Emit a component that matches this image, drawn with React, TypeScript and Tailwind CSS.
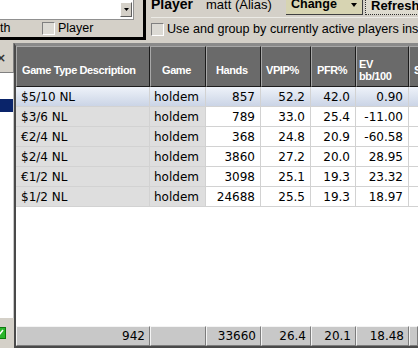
const widths = ["w-[134px]", "w-[56px]", "w-[55px]", "w-[50px]", "w-[45px]", "w-[53px]"];

const headers = [
  { label: ["Game Type Description"], pad: "pl-[5px]" },
  { label: ["Game"], pad: "pl-[11px]" },
  { label: ["Hands"], pad: "pl-[9px]" },
  { label: ["VPIP%"], pad: "pl-[4px]" },
  { label: ["PFR%"], pad: "pl-[5px]" },
  { label: ["EV", "bb/100"], pad: "pl-[2px]" },
];

const rows = [
  ["$5/10 NL", "holdem", "857", "52.2", "42.0", "0.90"],
  ["$3/6 NL", "holdem", "789", "33.0", "25.4", "-11.00"],
  ["€2/4 NL", "holdem", "368", "24.8", "20.9", "-60.58"],
  ["$2/4 NL", "holdem", "3860", "27.2", "20.0", "28.95"],
  ["€1/2 NL", "holdem", "3098", "25.1", "19.3", "23.32"],
  ["$1/2 NL", "holdem", "24688", "25.5", "19.3", "18.97"],
];

const totals = ["942", "", "33660", "26.4", "20.1", "18.48"];

function Checkbox() {
  return (
    <div className="w-[13px] h-[13px] shrink-0 border border-t-[#808080] border-l-[#808080] border-r-white border-b-white bg-[#dcdad4]" />
  );
}

function TopBar() {
  return (
    <div className="h-[43px] flex shrink-0 font-['Liberation_Sans',sans-serif] text-black">
      <div className="w-[146px] h-[40px] shrink-0 border-r-[3px] border-b-[3px] border-black flex flex-col">
        <div className="h-[20px] w-[134px] bg-white border-r border-b border-r-[#909090] border-b-[#909090] flex justify-end items-start pt-[2px] pr-[1px]">
          <div className="w-[12px] h-[15px] bg-[#d4d0c8] border border-t-white border-l-white border-r-[#606060] border-b-[#606060] flex items-center justify-center">
            <svg width="5" height="3" viewBox="0 0 5 3">
              <path d="M0 0h5L2.5 3z" fill="#000" />
            </svg>
          </div>
        </div>
        <div className="flex items-center h-[17px] text-[12.5px] leading-none">
          <span className="w-[42px]">th</span>
          <Checkbox />
          <span className="ml-[3px]">Player</span>
        </div>
      </div>
      <div className="flex-1 flex flex-col pl-[5px]">
        <div className="h-[17px] flex items-start overflow-hidden">
          <div className="flex items-center h-[22px] -mt-[7px]">
            <span className="text-[14px] font-bold leading-none w-[55px]">Player</span>
            <span className="text-[13px] leading-none w-[80px]">matt (Alias)</span>
            <div className="w-[77px] h-[22px] bg-[#d7d4b2] border-r border-b border-r-[#404040] border-b-[#404040] flex items-center pl-[5px] pt-[2px]">
              <span className="text-[12.5px] font-bold leading-none w-[60px]">Change</span>
              <svg width="6" height="4" viewBox="0 0 6 4">
                <path d="M0 0h6L3 4z" fill="#000" />
              </svg>
            </div>
            <div className="ml-[2px] w-[60px] h-[22px] bg-[#dedbcf] border border-dotted border-[#303030] flex items-center pl-[5px] pt-[2px]">
              <span className="text-[13px] font-bold leading-none whitespace-nowrap">Refresh</span>
            </div>
          </div>
        </div>
        <div className="h-[20px] flex items-center border-t border-[#ecebe6] text-[12.6px] leading-none pt-[3px]">
          <Checkbox />
          <span className="ml-[3px] whitespace-nowrap">Use and group by currently active players ins</span>
        </div>
      </div>
    </div>
  );
}

function LeftStrip() {
  return (
    <div className="w-[14px] shrink-0 flex flex-col">
      <div className="h-[30px] border-r border-b border-[#808080] flex items-center overflow-hidden">
        <span className="-ml-[4px] text-[12px] font-bold text-[#333] leading-none font-['DejaVu_Sans',sans-serif]">×</span>
      </div>
      <div className="flex-1 bg-white border-r border-[#c8c8c8] flex flex-col">
        <div className="h-[26px]" />
        <div className="h-[13px] bg-[#0a246a]" />
      </div>
      <div className="h-[30px] flex items-center">
        <div className="-ml-[6px] w-[12px] h-[12px] bg-[#2bb52b] border border-[#0c7a0c] flex items-center justify-center">
          <svg width="8" height="8" viewBox="0 0 8 8">
            <path d="M1 4l2 2 4-5" stroke="#fff" strokeWidth="1.5" fill="none" />
          </svg>
        </div>
      </div>
    </div>
  );
}

function Grid() {
  return (
    <div className="flex-1 flex flex-col border-l-2 border-t-[3px] border-b-2 border-l-[#4a4a4a] border-t-[#8a8a8a] border-b-[#4a4a4a] bg-white overflow-hidden font-['DejaVu_Sans',sans-serif]">
      <div className="h-[41px] flex shrink-0 bg-[#6a6a6a] font-['Liberation_Sans',sans-serif] text-white font-bold text-[11px] tracking-[-0.4px] leading-[12px]">
        {headers.map((h, i) => (
          <div
            key={i}
            className={`${widths[i]} shrink-0 border border-t-[#a8a8a8] border-l-[#a8a8a8] border-r-[#1c1c1c] border-b-[#1c1c1c] flex flex-col justify-center pt-[6px] ${h.pad}`}
          >
            {h.label.map((l) => (
              <span key={l} className="whitespace-nowrap">{l}</span>
            ))}
          </div>
        ))}
        <div className="flex-1 border border-t-[#a8a8a8] border-l-[#a8a8a8] border-r-[#1c1c1c] border-b-[#1c1c1c] flex items-center pt-[6px] pl-[4px] whitespace-nowrap">
          Showdown
        </div>
      </div>
      {rows.map((r, ri) => (
        <div
          key={ri}
          className={`h-[20px] flex shrink-0 text-[12px] text-black leading-none ${ri === 0 ? "bg-gradient-to-b from-[#eef2f9] to-[#c9d3e5]" : ""}`}
        >
          {r.map((c, ci) => (
            <div
              key={ci}
              className={`${widths[ci]} shrink-0 border-r border-b border-[#d2d2d2] flex items-center ${ci < 2 ? "justify-start" : "justify-end pr-[5px]"} ${ci === 0 ? "pl-[5px]" : ""} ${ci === 1 ? "pl-[4px]" : ""} ${ri > 0 && ci < 2 ? "bg-[#dedede]" : ""}`}
            >
              {c}
            </div>
          ))}
          <div className="flex-1 border-b border-[#d2d2d2]" />
        </div>
      ))}
      <div className="flex-1" />
      <div className="h-[20px] flex shrink-0 bg-[#c8c8c8] text-[12px] text-black leading-none">
        {totals.map((t, i) => (
          <div
            key={i}
            className={`${widths[i]} shrink-0 border border-t-[#f4f4f4] border-l-[#f4f4f4] border-r-[#7c7c7c] border-b-[#7c7c7c] flex items-center justify-end pr-[4px]`}
          >
            {t}
          </div>
        ))}
        <div className="flex-1 border border-t-[#f4f4f4] border-l-[#f4f4f4] border-r-[#7c7c7c] border-b-[#7c7c7c]" />
      </div>
    </div>
  );
}

export default function App() {
  return (
    <div className="w-[418px] h-[348px] overflow-hidden bg-[#d4d0c8] flex flex-col">
      <TopBar />
      <div className="flex-1 flex min-h-0">
        <LeftStrip />
        <Grid />
      </div>
    </div>
  );
}
